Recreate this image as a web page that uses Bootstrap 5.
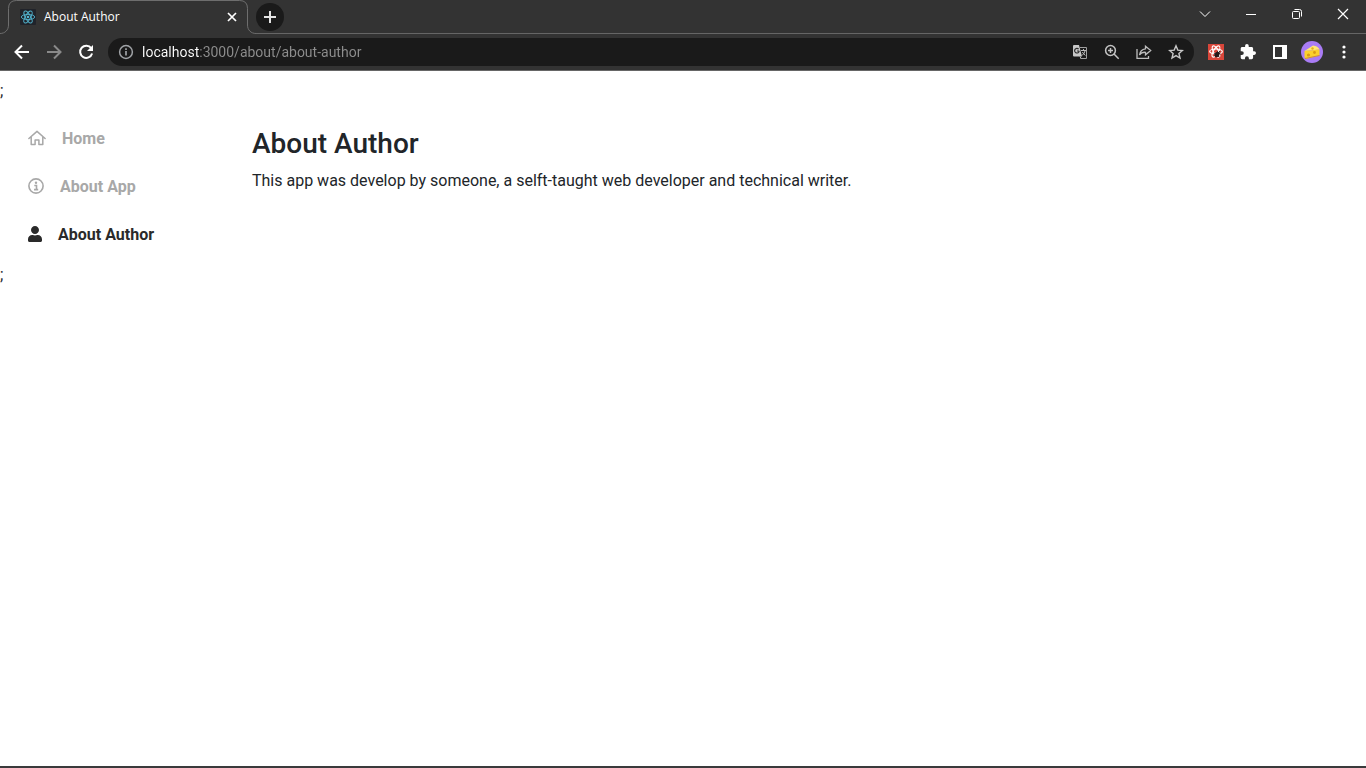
<!DOCTYPE html>
<html lang="en">
<head>
<meta charset="utf-8">
<meta name="viewport" content="width=device-width, initial-scale=1">
<title>About Author</title>
<link href="https://cdn.jsdelivr.net/npm/bootstrap@5.3.0/dist/css/bootstrap.min.css" rel="stylesheet">
<style>
body { font-family: Roboto, sans-serif; font-size: 16px; }
svg { display: block; flex: none; }
.browser { background: #333; color: #fff; font-family: "Open Sans", "Noto Sans", sans-serif; border-bottom: 1px solid #666; }
.tab-strip { height: 34px; }
.tab-item { width: 256px; height: 34px; padding: 0 16px 0 20px; font-size: 12px; }
.tab-outline { position: absolute; left: 0; top: 0; }
.tab-title { line-height: 16px; }
.strip-rest { border-bottom: 1px solid #666; }
.tool { display: flex; align-items: center; justify-content: center; border: 0; background: none; padding: 0; color: #fff; width: 32px; height: 28px; flex: none; }
.tool.small-tool { width: 16px; height: 16px; }
.new-tab { width: 28px; background: #1a1a1a; }
.win { width: 46px; }
.dim { color: #8a8a8a; }
.toolbar { height: 36px; padding: 4px 6px; }
.address { background: #1a1a1a; height: 28px; margin: 0 6px; padding: 0 2px 0 10px; color: #bdbdbd; }
/* The host part of the address is brighter than the path. */
.address input { border: 0; outline: 0; padding: 0; height: 24px; font-family: Roboto, sans-serif; font-size: 14px; color: #8e8e8e;
  background: linear-gradient(90deg, #fff 57px, #8e8e8e 57px); -webkit-background-clip: text; background-clip: text;
  -webkit-text-fill-color: transparent; }
.side { width: 252px; padding: 12px 28px 4px; }
.side a { display: flex; align-items: center; gap: 16px; height: 48px; color: #a8a8a8; font-weight: 700; text-decoration: none; }
.side a.active { color: #2a2a2a; }
.side svg { margin-bottom: 2px; }
.article { padding-top: 24px; }
.article h1 { font-size: 28px; line-height: 34px; font-weight: 500; }
.window-edge { height: 2px; background: #3a3a3c; }
</style>
</head>
<body class="d-flex flex-column min-vh-100 bg-white">
<header class="browser">
  <div class="tab-strip d-flex">
    <div class="tab-item position-relative d-flex align-items-center flex-shrink-0">
      <svg class="tab-outline" width="256" height="34" fill="none" stroke="#6e6e6e"><path d="M0 33.5C5 33.5 8.500 30 8.500 25V8.500Q8.500.5 16.500.5H239.500Q247.500.5 247.500 8.500V25C247.500 30 251 33.500 256 33.500"/></svg>
      <svg width="16" height="16" viewBox="0 0 16 16" fill="none" stroke="#52b4cf" stroke-width=".9"><rect width="16" height="16" rx="1" fill="#20232a" stroke="none"/><ellipse cx="8" cy="8" rx="6.700" ry="2.600"/><ellipse cx="8" cy="8" rx="6.700" ry="2.600" transform="rotate(60 8 8)"/><ellipse cx="8" cy="8" rx="6.700" ry="2.600" transform="rotate(120 8 8)"/><circle cx="8" cy="8" r="1.300" fill="#52b4cf" stroke="none"/></svg>
      <span class="tab-title ms-2 flex-grow-1 position-relative">About Author</span>
      <button class="tool small-tool position-relative" aria-label="Close tab"><svg width="16" height="16" stroke="#fff" stroke-width="1.700"><path d="M4 4l8 8M12 4l-8 8"/></svg></button>
    </div>
    <div class="strip-rest d-flex flex-grow-1 align-items-center">
      <button class="tool new-tab rounded-circle" aria-label="New tab"><svg width="14" height="14" stroke="#e4e4e4" stroke-width="2"><path d="M7 1v12M1 7h12"/></svg></button>
      <div class="d-flex ms-auto align-self-start">
        <button class="tool win" aria-label="Search tabs"><svg width="12" height="12" fill="none" stroke="#fff"><path d="M1 3.500l5 5 5-5"/></svg></button>
        <button class="tool win" aria-label="Minimize"><svg width="12" height="12" stroke="#fff"><path d="M1 6.500h10"/></svg></button>
        <button class="tool win" aria-label="Restore"><svg width="12" height="12" fill="none" stroke="#fff"><rect x="1.500" y="3.500" width="7" height="7" rx="1"/><path d="M3.500 1.500H8.500Q10.500 1.500 10.500 3.500V8.500"/></svg></button>
        <button class="tool win" aria-label="Close"><svg width="12" height="12" stroke="#fff" stroke-width="1.200"><path d="M1 1l10 10M11 1L1 11"/></svg></button>
      </div>
    </div>
  </div>
  <div class="toolbar d-flex align-items-center">
    <button class="tool" aria-label="Back"><svg width="16" height="16" fill="none" stroke="#fff" stroke-width="2"><path d="M15 8H2M8 1.500L1.500 8 8 14.500"/></svg></button>
    <button class="tool dim" aria-label="Forward"><svg width="16" height="16" fill="none" stroke="currentColor" stroke-width="2"><path d="M1 8h13M8 1.500L14.500 8 8 14.500"/></svg></button>
    <button class="tool" aria-label="Reload"><svg width="16" height="16" fill="none" stroke="#fff" stroke-width="2"><path d="M13.200 4.200A6.100 6.100 0 1 0 14.100 9.500"/><path d="M15 1v6H9z" fill="#fff" stroke="none"/></svg></button>
    <div class="address rounded-pill d-flex align-items-center flex-grow-1">
      <svg width="16" height="16" fill="none" stroke="#a0a3a7" stroke-width="1.500"><circle cx="8" cy="8" r="6.400"/><path d="M8 7v4.500M8 4.300v1.700" stroke-width="1.700"/></svg>
      <input class="flex-grow-1 ms-2" type="text" aria-label="Address" value="localhost:3000/about/about-author">
      <button class="tool" aria-label="Translate"><svg width="16" height="16"><path d="M8 3.500h6.500v11H8.500" fill="none" stroke="#a0a0a0"/><path d="M2 1H7L10 12.500H2Q1 12.500 1 11.500V2Q1 1 2 1z" fill="#c8c8c8"/><path d="M7.200 7H5M6.600 5.100A2.300 2.300 0 1 0 7.200 7" fill="none" stroke="#2a2a2a" stroke-width="1.200"/><path d="M9 6.500h5M11.500 5v1.500M13.200 6.500q-.7 3-3.200 5M10.300 8l3 3.500M8 12.500l1 2" fill="none" stroke="#bbb"/></svg></button>
      <button class="tool" aria-label="Zoom"><svg width="16" height="16" fill="none" stroke="#c4c4c4" stroke-width="1.500"><circle cx="6.500" cy="6.500" r="4.900"/><path d="M10 10l4.700 4.700M4 6.500h5M6.500 4v5"/></svg></button>
      <button class="tool" aria-label="Share"><svg width="16" height="16" fill="none" stroke="#bdbdbd" stroke-width="1.300"><path d="M1 5v9.400h11.500V12"/><path d="M9.500 2.200L14.700 6.500 9.500 10.800V8.300Q5.500 8 3.500 11 4.200 5.500 9.500 4.800z"/></svg></button>
      <button class="tool" aria-label="Bookmark"><svg width="16" height="16" fill="none" stroke="#c8c8c8" stroke-width="1.400"><path d="M8 1.800l1.800 4.300 4.600.4-3.500 3 1.100 4.500L8 11.600 4 14l1.100-4.500-3.500-3 4.600-.4z"/></svg></button>
    </div>
    <button class="tool" aria-label="Developer extension"><svg width="16" height="16"><rect width="16" height="16" fill="#d9463a"/><g fill="none" stroke="#fff" stroke-width="1.200"><ellipse cx="8" cy="7.500" rx="6.300" ry="2.500"/><ellipse cx="8" cy="7.500" rx="6.300" ry="2.500" transform="rotate(60 8 7.500)"/><ellipse cx="8" cy="7.500" rx="6.300" ry="2.500" transform="rotate(120 8 7.500)"/></g><ellipse cx="9" cy="10.500" rx="2.200" ry="3" fill="#26191a" transform="rotate(40 9 10.500)"/><path d="M6 9.500l5.500 3.500M7.500 13l4.500-6M9 7.500l3.500 2.500" stroke="#26191a"/></svg></button>
    <button class="tool" aria-label="Extensions"><svg width="16" height="16" viewBox="1 1 22 22" fill="#fff"><path d="M20.500 11H19V7c0-1.100-.9-2-2-2h-4V3.500a2.500 2.500 0 0 0-5 0V5H4c-1.100 0-2 .9-2 2v3.800h1.500a2.700 2.700 0 0 1 0 5.400H2V20c0 1.100.9 2 2 2h3.800v-1.500a2.700 2.700 0 0 1 5.400 0V22H17c1.100 0 2-.9 2-2v-4h1.500a2.500 2.500 0 0 0 0-5z"/></svg></button>
    <button class="tool" aria-label="Side panel"><svg width="16" height="16"><path fill="#fff" fill-rule="evenodd" d="M1 1h14v14H1zM3 3v10h7V3z"/></svg></button>
    <button class="tool" aria-label="Profile"><svg width="22" height="22"><circle cx="11" cy="11" r="11" fill="#a97cf5"/><path d="M3.500 10L12 4.500Q17 5 18.500 8.500z" fill="#ffe873"/><path d="M3.500 10l15-1.500v6L5 18q-1.500 0-1.500-2z" fill="#fbd12c"/><path d="M4 17.500l14.500-3" stroke="#c98b45"/><circle cx="7.500" cy="14" r="1.600" fill="#d99a16"/><circle cx="13.500" cy="11.500" r="1.400" fill="#d99a16"/><circle cx="11.500" cy="7.500" r="1.200" fill="#e3ad22"/></svg></button>
    <button class="tool" aria-label="Menu"><svg width="16" height="16" fill="#fff"><circle cx="8" cy="3" r="1.600"/><circle cx="8" cy="8" r="1.600"/><circle cx="8" cy="13" r="1.600"/></svg></button>
  </div>
</header>
<main class="flex-grow-1 pt-2">
  <div>;</div>
  <div class="d-flex">
    <nav class="side flex-shrink-0" aria-label="Main">
      <a href="#home"><svg width="18" height="16" fill="none" stroke="currentColor" stroke-width="1.500" stroke-linecap="round" stroke-linejoin="round"><path d="M.9 8.500L9 1.400l8.100 7.100M3.200 7v7.400h3.900V10h3.800v4.400h3.900V7"/></svg>Home</a>
      <a href="#about-app"><svg width="16" height="16" fill="none" stroke="currentColor" stroke-width="1.600"><circle cx="8" cy="8" r="7.100"/><path d="M6.300 7.500H8.500V11.500M6 11.600h4.200"/><circle cx="8" cy="4.800" r="1.200" fill="currentColor" stroke="none"/></svg>About App</a>
      <a href="#about-author" class="active" aria-current="page"><svg width="14" height="16" viewBox="0 0 448 512" fill="currentColor"><path d="M224 256c70.700 0 128-57.300 128-128S294.700 0 224 0 96 57.300 96 128s57.300 128 128 128zm89.600 32h-16.700c-22.200 10.200-46.900 16-72.900 16s-50.600-5.800-72.900-16h-16.700C60.200 288 0 348.200 0 422.400V464c0 26.500 21.500 48 48 48h352c26.500 0 48-21.500 48-48v-41.600c0-74.200-60.200-134.400-134.400-134.400z"/></svg>About Author</a>
    </nav>
    <section class="article flex-grow-1">
      <h1 class="mb-2">About Author</h1>
      <p class="mb-0">This app was develop by someone, a selft-taught web developer and technical writer.</p>
    </section>
  </div>
  <div>;</div>
</main>
<div class="window-edge"></div>
<script src="https://cdn.jsdelivr.net/npm/bootstrap@5.3.0/dist/js/bootstrap.bundle.min.js"></script>
</body>
</html>
